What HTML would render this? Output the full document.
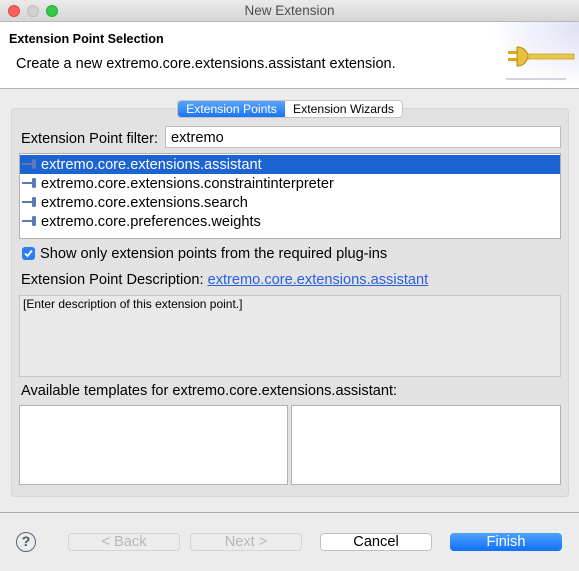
<!DOCTYPE html>
<html><head><meta charset="utf-8"><style>
*{margin:0;padding:0;box-sizing:border-box}
body{width:579px;height:571px;background:#ececec;font-family:"Liberation Sans",Arial,sans-serif;font-size:14.6px;color:#000;position:relative;overflow:hidden}
.a{position:absolute}
.title{left:0;top:0;width:579px;height:22px;background:linear-gradient(#ebebeb,#d6d6d6);border-bottom:1px solid #b9b9b9;text-align:center;line-height:21px;color:#4d4d4d;font-size:13.5px}
.dot{top:5px;width:12px;height:12px;border-radius:50%}
.hdr{left:0;top:22px;width:579px;height:67px;background:#fff;border-bottom:1px solid #b5b5b5}
.grp{left:11px;top:108px;width:558px;height:389px;background:#e2e2e2;border:1px solid #d6d6d6;border-radius:4px}
.box{background:#fff;border:1px solid #b0b0b0}
.row{left:20px;width:540px;height:19px;line-height:20px;padding-left:21px;font-size:14.6px}
.btn{top:533px;height:18px;border-radius:4px;text-align:center;line-height:19px;font-size:14.6px}
</style></head><body>
<div class="a title">New Extension</div>
<div class="a dot" style="left:8px;background:#fc605c;border:1px solid #de4a45"></div>
<div class="a dot" style="left:27px;background:#d0d0d0;border:1px solid #bdbdbd"></div>
<div class="a dot" style="left:46px;background:#34c84a;border:1px solid #27aa36"></div>
<div class="a hdr">
 <div class="a" style="left:9px;top:10px;font-weight:bold;font-size:12.6px">Extension Point Selection</div>
 <div class="a" style="left:16px;top:34px;font-size:14.5px">Create a new extremo.core.extensions.assistant extension.</div>
 <div class="a" style="left:490px;top:0;width:89px;height:66px;background:radial-gradient(ellipse at 100% 10%,#dfe2f4 0%,#fff 70%)"></div>
 <svg class="a" style="left:506px;top:23px" width="73" height="40"><rect x="2" y="6" width="10" height="3" fill="#d8a820"/><rect x="2" y="13" width="10" height="3" fill="#d8a820"/><path d="M11 2 Q20 2 22 11 Q20 21 11 21 Z" fill="#e8c040" stroke="#b88810"/><rect x="22" y="9" width="46" height="5" fill="#e8c848" stroke="#c09820" stroke-width=".7"/><rect x="0" y="33" width="60" height="2" fill="#d8d0e0"/></svg>
</div>
<div class="a grp"></div>
<div class="a" style="left:177px;top:100px;width:226px;height:18px;border:1px solid #c5c5c5;border-radius:4px;background:#fff;font-size:12.2px;line-height:16px;overflow:hidden">
 <div class="a" style="left:0;top:0;width:107px;height:16px;background:linear-gradient(#5aa4fb,#1a76f2);color:#fff;text-align:center">Extension Points</div>
 <div class="a" style="left:107px;top:0;width:117px;text-align:center">Extension Wizards</div>
</div>
<div class="a" style="left:21px;top:131px">Extension Point filter:</div>
<div class="a box" style="left:165px;top:126px;width:396px;height:22px;border-color:#bdbdbd;padding:4px 5px;line-height:15px">extremo</div>
<div class="a box" style="left:19px;top:153px;width:542px;height:86px"></div>
<div class="a row" style="top:155px;background:#1c63d4;color:#fff">extremo.core.extensions.assistant</div>
<div class="a row" style="top:174px">extremo.core.extensions.constraintinterpreter</div>
<div class="a row" style="top:193px">extremo.core.extensions.search</div>
<div class="a row" style="top:212px">extremo.core.preferences.weights</div>
<svg class="a" style="left:22px;top:158px" width="16" height="80"><g fill="#5b7bb5"><rect x="0" y="5" width="10" height="2"/><rect x="10" y="1" width="4" height="10" rx="1.5"/></g><g fill="#5b7bb5" transform="translate(0,19)"><rect x="0" y="5" width="10" height="2"/><rect x="10" y="1" width="4" height="10" rx="1.5"/></g><g fill="#5b7bb5" transform="translate(0,38)"><rect x="0" y="5" width="10" height="2"/><rect x="10" y="1" width="4" height="10" rx="1.5"/></g><g fill="#5b7bb5" transform="translate(0,57)"><rect x="0" y="5" width="10" height="2"/><rect x="10" y="1" width="4" height="10" rx="1.5"/></g></svg>
<div class="a" style="left:22px;top:247px;width:13px;height:13px;border-radius:3px;background:#2a7df5"><svg width="13" height="13"><path d="M3 6.5 L5.5 9 L10 3.5" stroke="#fff" stroke-width="1.8" fill="none"/></svg></div>
<div class="a" style="left:40px;top:246px">Show only extension points from the required plug-ins</div>
<div class="a" style="left:21px;top:272px">Extension Point Description: <span style="color:#2a5fe0;text-decoration:underline">extremo.core.extensions.assistant</span></div>
<div class="a" style="left:19px;top:295px;width:542px;height:82px;background:#e9e9e9;border:1px solid #c6c6c6;font-size:12px;padding:1px 3px">[Enter description of this extension point.]</div>
<div class="a" style="left:21px;top:383px">Available templates for extremo.core.extensions.assistant:</div>
<div class="a box" style="left:19px;top:405px;width:269px;height:80px"></div>
<div class="a box" style="left:291px;top:405px;width:270px;height:80px"></div>
<div class="a" style="left:0;top:512px;width:579px;height:1px;background:#a8a8a8"></div>
<div class="a" style="left:16px;top:532px;width:20px;height:20px;border:1.5px solid #5a6478;border-radius:50%;text-align:center;line-height:17px;font-weight:bold;font-size:14px;color:#4a5468">?</div>
<div class="a btn" style="left:68px;width:112px;border:1px solid #d4d4d4;background:#ececec;color:#b8b8b8;line-height:17px">&lt; Back</div>
<div class="a btn" style="left:190px;width:112px;border:1px solid #d4d4d4;background:#ececec;color:#b8b8b8;line-height:17px">Next &gt;</div>
<div class="a btn" style="left:320px;width:112px;border:1px solid #c0c0c0;background:#fff;line-height:17px">Cancel</div>
<div class="a btn" style="left:450px;width:112px;background:linear-gradient(#4ea2fc,#1170fb);color:#fff">Finish</div>
</body></html>
